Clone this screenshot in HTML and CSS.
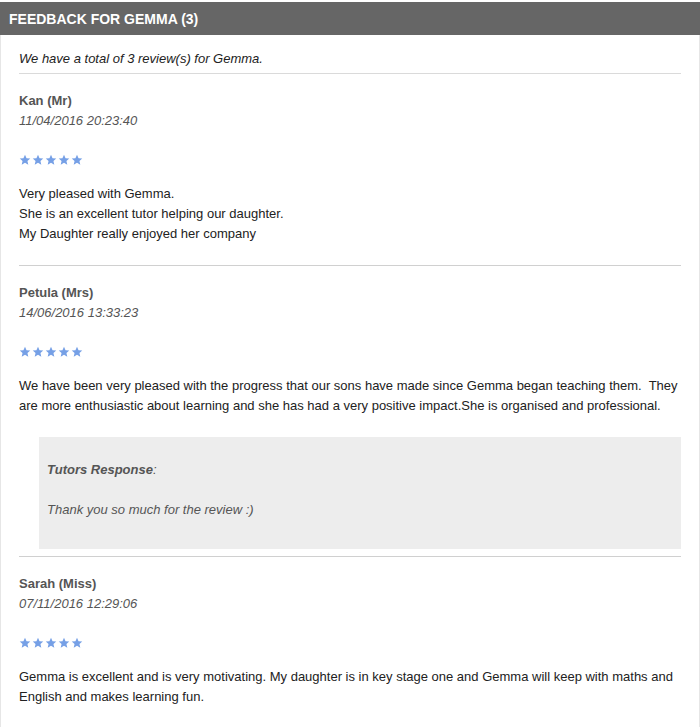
FILE: index.html
```html
<!DOCTYPE html>
<html>
<head>
<meta charset="utf-8">
<link rel="stylesheet" href="styles.css">
</head>
<body>
<div class="panel">
  <h2 class="panel-title">Feedback for Gemma (3)</h2>
  <div class="panel-body">
    <p class="intro">We have a total of 3 review(s) for Gemma.</p>

    <div class="review">
      <div class="name">Kan (Mr)</div>
      <div class="date">11/04/2016 20:23:40</div>
      <div class="stars">
        <svg viewBox="0 0 24 24"><path d="M12 1.5l3.1 7 7.4.6-5.6 4.9 1.7 7.4L12 17.5l-6.6 3.9 1.7-7.4L1.5 9.1l7.4-.6z"/></svg>
        <svg viewBox="0 0 24 24"><path d="M12 1.5l3.1 7 7.4.6-5.6 4.9 1.7 7.4L12 17.5l-6.6 3.9 1.7-7.4L1.5 9.1l7.4-.6z"/></svg>
        <svg viewBox="0 0 24 24"><path d="M12 1.5l3.1 7 7.4.6-5.6 4.9 1.7 7.4L12 17.5l-6.6 3.9 1.7-7.4L1.5 9.1l7.4-.6z"/></svg>
        <svg viewBox="0 0 24 24"><path d="M12 1.5l3.1 7 7.4.6-5.6 4.9 1.7 7.4L12 17.5l-6.6 3.9 1.7-7.4L1.5 9.1l7.4-.6z"/></svg>
        <svg viewBox="0 0 24 24"><path d="M12 1.5l3.1 7 7.4.6-5.6 4.9 1.7 7.4L12 17.5l-6.6 3.9 1.7-7.4L1.5 9.1l7.4-.6z"/></svg>
      </div>
      <p class="text">Very pleased with Gemma.<br>She is an excellent tutor helping our daughter.<br>My Daughter really enjoyed her company</p>
    </div>

    <div class="review">
      <div class="name">Petula (Mrs)</div>
      <div class="date">14/06/2016 13:33:23</div>
      <div class="stars">
        <svg viewBox="0 0 24 24"><path d="M12 1.5l3.1 7 7.4.6-5.6 4.9 1.7 7.4L12 17.5l-6.6 3.9 1.7-7.4L1.5 9.1l7.4-.6z"/></svg>
        <svg viewBox="0 0 24 24"><path d="M12 1.5l3.1 7 7.4.6-5.6 4.9 1.7 7.4L12 17.5l-6.6 3.9 1.7-7.4L1.5 9.1l7.4-.6z"/></svg>
        <svg viewBox="0 0 24 24"><path d="M12 1.5l3.1 7 7.4.6-5.6 4.9 1.7 7.4L12 17.5l-6.6 3.9 1.7-7.4L1.5 9.1l7.4-.6z"/></svg>
        <svg viewBox="0 0 24 24"><path d="M12 1.5l3.1 7 7.4.6-5.6 4.9 1.7 7.4L12 17.5l-6.6 3.9 1.7-7.4L1.5 9.1l7.4-.6z"/></svg>
        <svg viewBox="0 0 24 24"><path d="M12 1.5l3.1 7 7.4.6-5.6 4.9 1.7 7.4L12 17.5l-6.6 3.9 1.7-7.4L1.5 9.1l7.4-.6z"/></svg>
      </div>
      <p class="text">We have been very pleased with the progress that our sons have made since Gemma began teaching them.&nbsp; They are more enthusiastic about learning and she has had a very positive impact.She is organised and professional.</p>
      <div class="response">
        <p class="response-label"><b>Tutors Response</b>:</p>
        <p class="response-text">Thank you so much for the review :)</p>
      </div>
    </div>

    <div class="review">
      <div class="name">Sarah (Miss)</div>
      <div class="date">07/11/2016 12:29:06</div>
      <div class="stars">
        <svg viewBox="0 0 24 24"><path d="M12 1.5l3.1 7 7.4.6-5.6 4.9 1.7 7.4L12 17.5l-6.6 3.9 1.7-7.4L1.5 9.1l7.4-.6z"/></svg>
        <svg viewBox="0 0 24 24"><path d="M12 1.5l3.1 7 7.4.6-5.6 4.9 1.7 7.4L12 17.5l-6.6 3.9 1.7-7.4L1.5 9.1l7.4-.6z"/></svg>
        <svg viewBox="0 0 24 24"><path d="M12 1.5l3.1 7 7.4.6-5.6 4.9 1.7 7.4L12 17.5l-6.6 3.9 1.7-7.4L1.5 9.1l7.4-.6z"/></svg>
        <svg viewBox="0 0 24 24"><path d="M12 1.5l3.1 7 7.4.6-5.6 4.9 1.7 7.4L12 17.5l-6.6 3.9 1.7-7.4L1.5 9.1l7.4-.6z"/></svg>
        <svg viewBox="0 0 24 24"><path d="M12 1.5l3.1 7 7.4.6-5.6 4.9 1.7 7.4L12 17.5l-6.6 3.9 1.7-7.4L1.5 9.1l7.4-.6z"/></svg>
      </div>
      <p class="text">Gemma is excellent and is very motivating. My daughter is in key stage one and Gemma will keep with maths and English and makes learning fun.</p>
    </div>
  </div>
</div>
</body>
</html>
```

FILE: styles.css
```css
html, body {
  margin: 0;
  padding: 0;
  background: #fff;
}
body {
  font-family: "Liberation Sans", Arial, sans-serif;
  font-size: 13px;
  line-height: 20px;
  color: #222;
}
.panel {
  padding-top: 2px;
}
.panel-title {
  margin: 0;
  height: 33px;
  line-height: 34px;
  padding-left: 9px;
  background: #666;
  color: #fff;
  font-size: 14px;
  font-weight: bold;
  text-transform: uppercase;
}
.panel-body {
  border-left: 1px solid #e6e6e6;
  border-right: 1px solid #e6e6e6;
  padding: 0 18px;
  min-height: 700px;
}
.intro {
  margin: 0;
  padding: 14px 0 4px;
  font-style: italic;
  border-bottom: 1px solid #dadada;
}
.review {
  padding-top: 17px;
  border-bottom: 1px solid #d0d0d0;
}
.review:last-child {
  border-bottom: none;
}
.name {
  font-weight: bold;
  color: #555;
}
.date {
  font-style: italic;
  color: #555;
}
.stars {
  display: flex;
  gap: 1px;
  height: 12px;
  margin: 23px 0 18px;
}
.stars svg {
  width: 12px;
  height: 12px;
  fill: #76a0e6;
}
.text {
  margin: 0 0 21px;
}
.response {
  margin: 0 0 7px 20px;
  padding: 23px 8px 29px;
  background: #ededed;
  color: #555;
  font-style: italic;
}
.response p {
  margin: 0;
}
.response-label b {
  font-weight: bold;
}
.response-text {
  margin-top: 20px !important;
}
```
